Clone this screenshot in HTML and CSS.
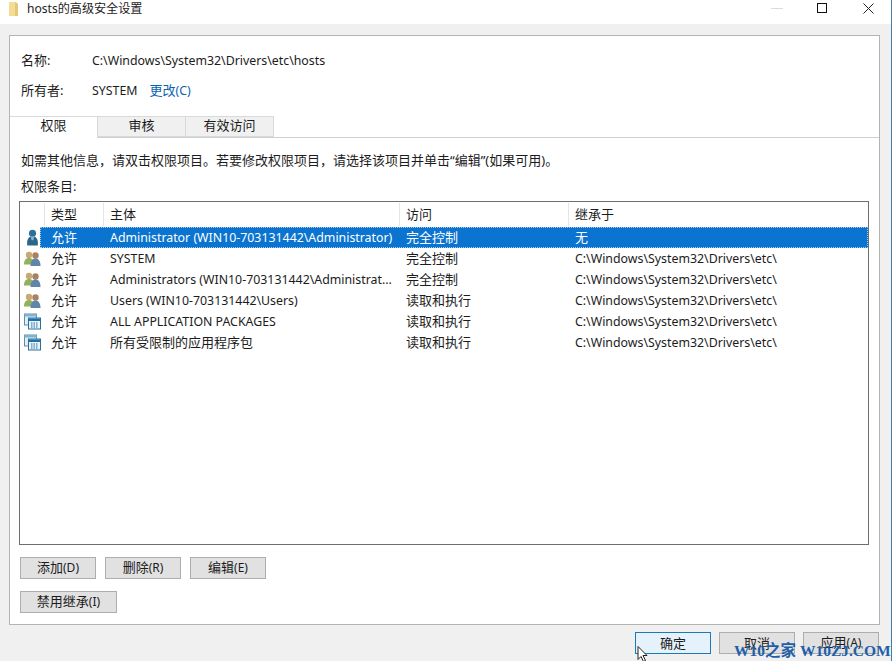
FILE: index.html
```html
<!DOCTYPE html>
<html lang="zh-CN">
  <head>
    <meta charset="UTF-8" />
    <title>hosts的高级安全设置</title>
    <link rel="stylesheet" href="styles.css">
  </head>
  <body>
    <svg class="defs" width="0" height="0">
      <symbol id="user" viewBox="0 0 16 18">
        <circle cx="8" cy="4.500" r="3.800" fill="#2f7196"/>
        <path d="M2.500 17.500c-.8-4.500 .5-8.500 3.500-9.500h4c3 1 4.300 5 3.500 9.500z" fill="#2b6587"/>
        <path d="M6 8h4l-1 4H7z" fill="#7fb6d0"/>
      </symbol>
      <symbol id="group" viewBox="0 0 17 15">
        <circle cx="5" cy="4" r="3.200" fill="#c9a877"/>
        <path d="M0 13.500c0-4.500 2-6.500 5-6.500s5 2 5 6.500z" fill="#93b05c"/>
        <circle cx="11.500" cy="4.500" r="3.200" fill="#a9825f"/>
        <path d="M6.500 15c0-5 2-7.500 5-7.500s5 2.500 5 7.500z" fill="#5f86a8"/>
      </symbol>
      <symbol id="pkg" viewBox="0 0 17 16">
        <rect x=".5" y=".5" width="12" height="11" fill="#dfeef6" stroke="#5b8fae"/>
        <rect x=".5" y=".5" width="12" height="2.500" fill="#7fb2cf"/>
        <rect x="4.500" y="4.500" width="12" height="11" fill="#e9f3f9" stroke="#2f6f96"/>
        <rect x="5" y="5" width="11" height="2.500" fill="#1f6fa8"/>
        <path d="M7 9.500h7M7 11.500h7M7 13.500h7" stroke="#1f6fa8" stroke-dasharray="1.500 1"/>
      </symbol>
    </svg>

    <div class="window">
      <div class="titlebar">
        <svg class="title-icon" width="10" height="14" viewBox="0 0 10 14">
          <path d="M0 0h7l2 2v12H0z" fill="#f3dc94"/>
          <path d="M6 0l3 2v12H6z" fill="#e3c878"/>
        </svg>
        <span class="title-text">hosts的高级安全设置</span>
        <div class="win-buttons">
          <svg width="12" height="12" viewBox="0 0 12 12"><path d="M0 5.500h12" stroke="#dcdcdc"/></svg>
          <svg width="12" height="12" viewBox="0 0 12 12"><rect x=".5" y=".5" width="9" height="9" fill="none" stroke="#111"/></svg>
          <svg width="12" height="12" viewBox="0 0 12 12"><path d="M.5 .5l10 10M10.500 .5l-10 10" stroke="#222"/></svg>
        </div>
      </div>

      <div class="content">
        <div class="panel">
          <div class="info-row name-row"><span class="info-label">名称:</span><span class="lat">C:\Windows\System32\Drivers\etc\hosts</span></div>
          <div class="info-row owner-row"><span class="info-label">所有者:</span><span class="lat">SYSTEM</span><a class="change-link">更改<span class="lat">(C)</span></a></div>

          <div class="tabs">
            <div class="tab active">权限</div>
            <div class="tab">审核</div>
            <div class="tab">有效访问</div>
          </div>

          <div class="tab-body">
            <p class="hint">如需其他信息，请双击权限项目。若要修改权限项目，请选择该项目并单击“编辑”(如果可用)。</p>
            <p class="list-label">权限条目:</p>

            <div class="list">
              <div class="row head">
                <span class="c-icon"></span><span>类型</span><span>主体</span><span>访问</span><span>继承于</span>
              </div>
              <div class="row selected">
                <svg class="c-icon"><use href="#user"/></svg><span>允许</span><span class="lat">Administrator (WIN10-703131442\Administrator)</span><span>完全控制</span><span>无</span>
              </div>
              <div class="row">
                <svg class="c-icon"><use href="#group"/></svg><span>允许</span><span class="lat">SYSTEM</span><span>完全控制</span><span class="lat">C:\Windows\System32\Drivers\etc\</span>
              </div>
              <div class="row">
                <svg class="c-icon"><use href="#group"/></svg><span>允许</span><span class="lat">Administrators (WIN10-703131442\Administrat...</span><span>完全控制</span><span class="lat">C:\Windows\System32\Drivers\etc\</span>
              </div>
              <div class="row">
                <svg class="c-icon"><use href="#group"/></svg><span>允许</span><span class="lat">Users (WIN10-703131442\Users)</span><span>读取和执行</span><span class="lat">C:\Windows\System32\Drivers\etc\</span>
              </div>
              <div class="row">
                <svg class="c-icon"><use href="#pkg"/></svg><span>允许</span><span class="lat">ALL APPLICATION PACKAGES</span><span>读取和执行</span><span class="lat">C:\Windows\System32\Drivers\etc\</span>
              </div>
              <div class="row">
                <svg class="c-icon"><use href="#pkg"/></svg><span>允许</span><span>所有受限制的应用程序包</span><span>读取和执行</span><span class="lat">C:\Windows\System32\Drivers\etc\</span>
              </div>
            </div>

            <div class="actions">
              <button class="btn">添加<span class="key">(D)</span></button>
              <button class="btn">删除<span class="key">(R)</span></button>
              <button class="btn">编辑<span class="key">(E)</span></button>
            </div>
            <button class="btn btn-wide">禁用继承<span class="key">(I)</span></button>
          </div>
        </div>

        <div class="footer">
          <button class="btn btn-default">确定</button>
          <button class="btn">取消</button>
          <button class="btn">应用<span class="key">(A)</span></button>
        </div>
      </div>
    </div>

    <!-- mouse pointer and site watermark sit on top of the dialog -->
    <svg class="cursor" width="14" height="16" viewBox="0 0 14 16">
      <path d="M1 .5v13l3-3 2.500 5 2-1-2.500-5h4z" fill="#fff" stroke="#222"/>
    </svg>
    <div class="watermark">W10之家 W10ZJ.COM</div>
  </body>
</html>
```

FILE: styles.css
```css
html, body {
  margin: 0;
  padding: 0;
}

body {
  position: relative;
  width: 893px;
  height: 661px;
  overflow: hidden;
  background-color: #fff;
  color: #1c1c1c;
  font-family: "Noto Sans", "Noto Sans CJK SC", sans-serif;
  font-size: 13px;
  line-height: 16px;
}

.lat {
  font-size: 12.35px;
}

.key {
  font-size: 12px;
}

.defs {
  position: absolute;
}

.window {
  width: 891px;
  height: 661px;
  border-right: 1px solid #3f7fa8;
  background-color: #f0f0f0;
}

.titlebar {
  display: flex;
  height: 24px;
  padding-left: 9px;
  background-color: #fff;
}

.title-icon {
  margin-top: 2px;
  margin-right: 8px;
}

.title-text {
  padding-top: 1px;
  font-size: 12.1px;
}

.win-buttons {
  display: flex;
  gap: 34px;
  margin-top: 3px;
  margin-left: auto;
  margin-right: 16px;
}

.content {
  padding: 11px 11px 0 9px;
}

.panel {
  box-sizing: border-box;
  width: 871px;
  height: 590px;
  padding-top: 17px;
  border: 1px solid #b4b4b4;
  background-color: #fff;
}

.info-row {
  display: flex;
  height: 16px;
  padding-left: 11px;
}

.owner-row {
  margin-top: 14px;
}

.info-label {
  width: 71px;
  line-height: 14px;
}

.change-link {
  margin-left: 12px;
  color: #0a64b0;
  line-height: 14px;
}

.tabs {
  display: flex;
  height: 21px;
  margin-top: 17px;
  border-bottom: 1px solid #d0d0d0;
}

.tab {
  box-sizing: border-box;
  width: 88px;
  height: 21px;
  border: 1px solid #d9d9d9;
  border-left: 0;
  background-color: #f0f0f0;
  text-align: center;
  line-height: 16px;
}

.tab.active {
  height: 22px;
  border-bottom: 0;
  background-color: #fff;
}

.tab-body {
  padding: 14px 11px 0 9px;
}

.hint,
.list-label {
  margin: 0;
  padding-left: 2px;
}

.list-label {
  margin-top: 10px;
}

.list {
  box-sizing: border-box;
  width: 850px;
  height: 344px;
  margin-top: 7px;
  border: 1px solid #6e6e6e;
  background-color: #fff;
}

.row {
  display: grid;
  grid-template-columns: 24px 59px 296px 169px 1fr;
  align-items: center;
  height: 21px;
}

.row > span {
  padding-left: 7px;
  white-space: nowrap;
}

/* the CJK face sits a little low next to the latin one */
.row > span:not(.lat) {
  padding-bottom: 2px;
}

.c-icon {
  width: 17px;
  height: 17px;
  margin-left: 4px;
}

.head {
  height: 24px;
  margin-bottom: 1px;
}

.head > span {
  box-sizing: border-box;
  height: 23px;
  padding-left: 6px;
  line-height: 23px;
  border-left: 1px solid #e5e5e5;
}

.head > .c-icon {
  border-left: 0;
}

/* icon cell stays white, the blue starts after it */
.selected {
  position: relative;
  color: #fff;
  background: linear-gradient(to right, #fff 20px, #0a74d0 20px);
}

.selected::after {
  content: "";
  position: absolute;
  top: 0;
  right: 0;
  bottom: 0;
  left: 20px;
  border: 1px dotted #a9c9e6;
}

.actions {
  display: flex;
  gap: 9px;
  margin-top: 12px;
  padding-left: 1px;
}

.btn {
  box-sizing: border-box;
  width: 76px;
  height: 22px;
  padding: 0 0 1px;
  border: 1px solid #adadad;
  border-radius: 0;
  background-color: #e1e1e1;
  color: #1c1c1c;
  font: inherit;
}

.btn-wide {
  width: 97px;
  margin-top: 12px;
  margin-left: 1px;
}

.footer {
  display: flex;
  justify-content: flex-end;
  gap: 8px;
  margin-top: 7px;
  padding-right: 1px;
}

.btn-default {
  border-color: #1a7ab8;
  background-color: #e5f1fb;
}

.cursor {
  position: absolute;
  left: 637px;
  top: 646px;
}

.watermark {
  position: absolute;
  left: 734px;
  top: 642px;
  color: #1f5fa8;
  font-family: "Liberation Serif", "Noto Sans CJK SC", serif;
  font-size: 15.5px;
  font-weight: bold;
  line-height: 18px;
  white-space: nowrap;
}
```
